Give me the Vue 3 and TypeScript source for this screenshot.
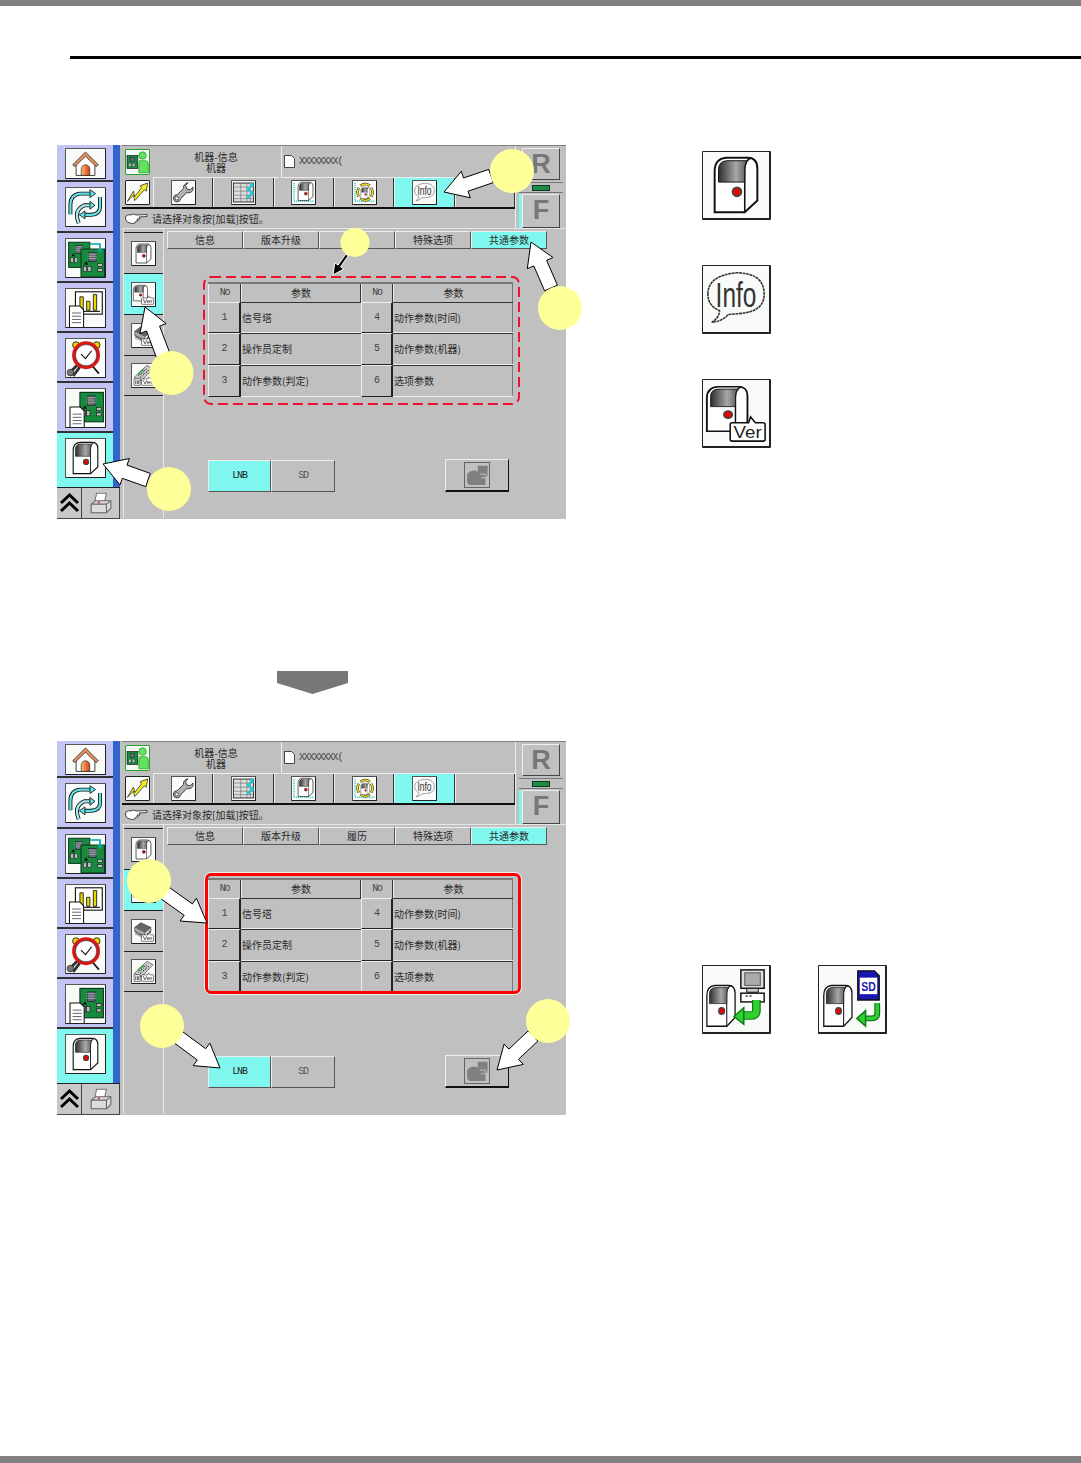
<script setup lang="ts">
type Point = [number, number];

interface Callout {
  center: Point;
  r: number;
  tail: Point;
  tip: Point;
  small?: boolean;
}

interface Step {
  frame: "dashed" | "solid";
  historyLabel: string;
  callouts: Callout[];
  sideIcons: string[];
  sideRow: boolean;
}

const rail = ["home", "cycle", "boards", "chart", "clock", "docboard", "device"];
const tools = ["wrench", "grid", "devframe", "devgear", "info", ""];
const subnav = ["device", "devver", "chipver", "chipsver"];

const rows = [
  [1, "信号塔", 4, "动作参数(时间)"],
  [2, "操作员定制", 5, "动作参数(机器)"],
  [3, "动作参数(判定)", 6, "选项参数"],
];

const steps: Step[] = [
  {
    frame: "dashed",
    historyLabel: "",
    sideIcons: ["device", "info", "devver"],
    sideRow: false,
    callouts: [
      { center: [455, 26], r: 22, tail: [434, 31], tip: [387, 47] },
      { center: [298, 97.5], r: 14.5, tail: [290, 110], tip: [276, 130], small: true },
      { center: [503, 163], r: 22, tail: [494, 143], tip: [474, 97] },
      { center: [114.5, 228], r: 22, tail: [106, 210], tip: [88, 162] },
      { center: [112, 344], r: 22, tail: [91, 335], tip: [46, 319] },
    ],
  },
  {
    frame: "solid",
    historyLabel: "履历",
    sideIcons: ["devpc", "devsd"],
    sideRow: true,
    callouts: [
      { center: [92, 140], r: 22, tail: [108, 152], tip: [150, 182] },
      { center: [105, 285], r: 22, tail: [121, 296], tip: [163, 327] },
      { center: [491, 280], r: 22, tail: [476, 295], tip: [440, 329] },
    ],
  },
];

// arrow outline from tail to tip, shaft and head sizes in px
function arrowPoints(c: Callout): string {
  const shaft = c.small ? 3 : 14;
  const head = c.small ? 11 : 28;
  const len = c.small ? 11 : 23;
  const dx = c.tip[0] - c.tail[0];
  const dy = c.tip[1] - c.tail[1];
  const d = Math.hypot(dx, dy);
  const ux = dx / d;
  const uy = dy / d;
  const bx = c.tip[0] - ux * len;
  const by = c.tip[1] - uy * len;
  const pt = (x: number, y: number, off: number) =>
    `${(x - uy * off).toFixed(1)},${(y + ux * off).toFixed(1)}`;
  return [
    pt(c.tail[0], c.tail[1], shaft / 2),
    pt(bx, by, shaft / 2),
    pt(bx, by, head / 2),
    pt(c.tip[0], c.tip[1], 0),
    pt(bx, by, -head / 2),
    pt(bx, by, -shaft / 2),
    pt(c.tail[0], c.tail[1], -shaft / 2),
  ].join(" ");
}
</script>

<template>
  <div class="page">
    <svg class="sprites" aria-hidden="true">
      <defs>
        <linearGradient id="win" x1="0" x2="1" y1="0" y2="0">
          <stop offset="0" stop-color="#2e2e2e" />
          <stop offset="0.6" stop-color="#a8a8a8" />
          <stop offset="1" stop-color="#555" />
        </linearGradient>
        <linearGradient id="door" x1="0" x2="1" y1="0" y2="0">
          <stop offset="0" stop-color="#f8c070" />
          <stop offset="1" stop-color="#d83818" />
        </linearGradient>
        <g id="g-device">
          <path d="M12 62V20Q12 7 24 6H46Q56 6 56 17V50L43 62Z" fill="#fff" stroke="#111" stroke-width="2" />
          <path d="M43 62V19Q43 8 50 6" fill="none" stroke="#111" stroke-width="1.6" />
          <path d="M16 31V18Q16 10 24 9H46Q43 11 43 18V31Z" fill="url(#win)" stroke="#111" />
          <circle cx="35" cy="41" r="4.5" fill="#e00" stroke="#444" stroke-width="2" />
        </g>
        <g id="g-pcb">
          <rect x="2" y="2" width="42" height="50" fill="#188a40" stroke="#0a3a1a" stroke-width="2" />
          <rect x="16" y="8" width="13" height="16" fill="#667" stroke="#111" />
          <path d="M14 11h17M14 15h17M14 19h17" stroke="#ccc" stroke-width="1" />
          <path d="M7 30l4-6 4 6z" fill="#111" />
          <rect x="6" y="33" width="6" height="9" fill="#bbb" stroke="#111" />
          <rect x="14" y="33" width="6" height="9" fill="#bbb" stroke="#111" />
          <rect x="32" y="28" width="8" height="5" fill="#bbb" stroke="#111" />
          <rect x="32" y="37" width="8" height="5" fill="#bbb" stroke="#111" />
        </g>
        <g id="g-doc">
          <path d="M2 2H18L24 8V36H2Z" fill="#fff" stroke="#111" stroke-width="1.6" />
          <path d="M6 13H20M6 18H20M6 23H20M6 28H20" stroke="#555" stroke-width="1.4" />
        </g>
        <g id="g-ver">
          <path d="M28 46Q28 44 30 44H47L49 38L54 44H62Q64 44 64 46V61Q64 63 62 63H30Q28 63 28 61Z" fill="#fff" stroke="#111" stroke-width="1.6" />
          <text x="46" y="60" class="svg-label ver-label" text-anchor="middle" textLength="29" lengthAdjust="spacingAndGlyphs">Ver</text>
        </g>
        <g id="g-chip">
          <path d="M8 22L26 8L56 22L38 38Z" fill="#666" stroke="#111" stroke-width="1.5" />
          <path d="M8 22V34L38 50V38M38 50L56 34V22" fill="#aaa" stroke="#111" stroke-width="1.5" />
          <path d="M12 34v10M18 37v10M24 40v10M30 43v10M44 38l6 5M50 33l6 5" stroke="#111" stroke-width="2" />
        </g>
      </defs>

      <symbol id="i-home" viewBox="0 0 68 68">
        <path d="M12 34L34 14L56 34V62H12Z" fill="#fff" stroke="#222" stroke-width="2" />
        <path d="M4 37L34 7L64 37L59 41L34 17L9 41Z" fill="#e8905a" stroke="#333" stroke-width="2" />
        <path d="M24 62V47a10 10 0 0 1 20 0V62Z" fill="url(#door)" stroke="#222" stroke-width="1.5" />
      </symbol>
      <symbol id="i-cycle" viewBox="0 0 68 68">
        <g fill="none" stroke-linecap="butt">
          <path d="M7 47V30Q7 12 24 10H42" stroke="#111" stroke-width="7" />
          <path d="M7 47V30Q7 12 24 10H42" stroke="#60e0e8" stroke-width="4" />
          <path d="M60 16V34Q60 47 44 48H32" stroke="#111" stroke-width="7" />
          <path d="M60 16V34Q60 47 44 48H32" stroke="#60e0e8" stroke-width="4" />
          <path d="M22 63Q12 40 32 31H42" stroke="#111" stroke-width="7" />
          <path d="M22 63Q12 40 32 31H42" stroke="#a8eef0" stroke-width="4" />
        </g>
        <path d="M42 3L52 10L42 17ZM33 41L23 48L33 55ZM42 24L51 31L42 38Z" fill="#60e0e8" stroke="#111" stroke-width="1.5" />
      </symbol>
      <symbol id="i-boards" viewBox="0 0 68 68">
        <use href="#g-pcb" transform="translate(2 4) scale(.9)" />
        <use href="#g-pcb" transform="translate(24 16)" />
        <path d="M42 9H60V20" fill="none" stroke="#0aa" stroke-width="3" />
        <path d="M55 18H65L60 25Z" fill="#0aa" />
      </symbol>
      <symbol id="i-chart" viewBox="0 0 68 68">
        <rect x="16" y="5" width="48" height="40" fill="#fff" stroke="#111" stroke-width="2" />
        <path d="M24 38V14h6v24zM36 38V22h6v16zM48 38V10h6v28z" fill="#e8d800" stroke="#111" stroke-width="1.5" />
        <path d="M20 40H60" stroke="#111" stroke-width="2" />
        <use href="#g-doc" transform="translate(3 28) scale(1.15)" />
      </symbol>
      <symbol id="i-clock" viewBox="0 0 68 68">
        <circle cx="17" cy="11" r="6" fill="#e8d800" stroke="#111" stroke-width="1.5" />
        <circle cx="54" cy="11" r="6" fill="#e8d800" stroke="#111" stroke-width="1.5" />
        <path d="M6 60L22 44M12 66L24 50" stroke="#333" stroke-width="5" />
        <circle cx="7" cy="60" r="6" fill="#777" stroke="#111" />
        <path d="M46 48L58 62" stroke="#111" stroke-width="3" />
        <circle cx="35" cy="29" r="22" fill="#fff" stroke="#d81818" stroke-width="6" />
        <circle cx="35" cy="29" r="19" fill="none" stroke="#111" stroke-width="1" />
        <path d="M26 27L34 35L45 21" fill="none" stroke="#111" stroke-width="2" />
      </symbol>
      <symbol id="i-docboard" viewBox="0 0 68 68">
        <use href="#g-pcb" transform="translate(22 4) scale(1,1.05)" />
        <use href="#g-doc" transform="translate(4 30) scale(1.15)" />
      </symbol>
      <symbol id="i-device" viewBox="0 0 68 68">
        <use href="#g-device" />
      </symbol>
      <symbol id="i-person" viewBox="0 0 68 68">
        <path d="M40 30H58Q66 30 66 40V66H38V46Z" fill="#66e060" stroke="#0a9a18" stroke-width="2" />
        <circle cx="49" cy="15" r="11" fill="#66e060" stroke="#0a9a18" stroke-width="2" />
        <rect x="3" y="15" width="32" height="38" fill="#188a40" stroke="#111" stroke-width="2" />
        <rect x="13" y="20" width="11" height="12" fill="#667" stroke="#111" />
        <path d="M8 38h7v9h-7zM19 38h7v9h-7z" fill="#ccc" stroke="#111" />
      </symbol>
      <symbol id="i-trend" viewBox="0 0 68 68">
        <path d="M4 60L22 30L26 46L46 20L42 14L64 6L60 30L54 26L26 58L22 42Z" fill="#f4ec20" stroke="#111" stroke-width="2" />
      </symbol>
      <symbol id="i-wrench" viewBox="0 0 68 68">
        <path d="M47 5L40 14L44 24L54 26L62 18Q64 30 54 34Q48 36 44 34L26 52Q24 62 14 62Q4 60 4 50Q6 40 16 40L34 22Q32 10 47 5Z" fill="#b0b0b0" stroke="#222" stroke-width="2.5" />
        <circle cx="14" cy="51" r="5" fill="#fff" stroke="#222" stroke-width="2" />
      </symbol>
      <symbol id="i-grid" viewBox="0 0 68 68">
        <rect x="4" y="6" width="60" height="56" fill="#ddd" stroke="#111" stroke-width="2.5" />
        <path d="M4 18H64M4 30H64M4 42H64M4 52H64M26 6V62M44 6V62M54 6V62" stroke="#555" stroke-width="1.5" />
        <path d="M44 18h10v12H44zM54 30h10v12H54zM44 42h10v10H44zM54 6h10v12H54z" fill="#20c8d8" />
      </symbol>
      <symbol id="i-devframe" viewBox="0 0 68 68">
        <path d="M6 6V60H64" fill="none" stroke="#20c0d0" stroke-width="4" stroke-dasharray="3 3" />
        <use href="#g-device" transform="translate(6 -2) scale(1,.96)" />
      </symbol>
      <symbol id="i-devgear" viewBox="0 0 68 68">
        <path d="M6 6V60H64" fill="none" stroke="#20c0d0" stroke-width="4" stroke-dasharray="3 3" />
        <path d="M22 14Q36 4 50 14M54 20Q62 34 54 46M50 52Q36 62 22 52M17 46Q10 34 17 20" fill="none" stroke="#111" stroke-width="7" />
        <path d="M22 14Q36 4 50 14M54 20Q62 34 54 46M50 52Q36 62 22 52M17 46Q10 34 17 20" fill="none" stroke="#f0e020" stroke-width="4.5" />
        <use href="#g-device" transform="translate(16 15) scale(.6)" />
      </symbol>
      <symbol id="i-info" viewBox="0 0 68 68">
        <path d="M5 29Q5 10 34 7Q63 7 63 29Q63 47 38 49L26 50Q20 57 9 58Q17 53 17 46Q5 41 5 29Z" fill="none" stroke="#333" stroke-width="1.6" stroke-dasharray="3 .6" />
        <text x="34" y="42" class="svg-label info-label" text-anchor="middle" textLength="42" lengthAdjust="spacingAndGlyphs">Info</text>
      </symbol>
      <symbol id="i-devver" viewBox="0 0 68 68">
        <use href="#g-device" transform="translate(-7.4 2) scale(.95 .82)" />
        <use href="#g-ver" />
      </symbol>
      <symbol id="i-chipver" viewBox="0 0 68 68">
        <use href="#g-chip" />
        <use href="#g-ver" />
      </symbol>
      <symbol id="i-chipsver" viewBox="0 0 68 68">
        <path d="M6 40L44 4L62 14L28 50Z" fill="#ccc" stroke="#111" stroke-width="1.5" />
        <path d="M18 36L44 14M24 40L50 18" stroke="#222" stroke-width="3" stroke-dasharray="3 3" />
        <path d="M18 30L36 14" stroke="#18a020" stroke-width="5" stroke-dasharray="5 3" />
        <rect x="6" y="44" width="18" height="20" fill="#fff" stroke="#111" stroke-width="1.5" />
        <path d="M11 48v12M16 48v12M20 48v12" stroke="#111" stroke-width="2" />
        <use href="#g-ver" />
      </symbol>
      <symbol id="i-devpc" viewBox="0 0 68 68">
        <use href="#g-device" transform="translate(-3.9 15.5) scale(.66 .75)" />
        <rect x="39" y="4" width="24" height="19" fill="#ddd" stroke="#111" stroke-width="1.5" />
        <rect x="43" y="7" width="16" height="13" fill="#aaa" stroke="#555" />
        <path d="M45 23h12v4h-12z" fill="#ccc" stroke="#111" />
        <rect x="39" y="28" width="24" height="9" fill="#fff" stroke="#111" stroke-width="1.5" />
        <path d="M44 31h2M48 31h2" stroke="#333" stroke-width="1.5" />
        <path d="M55 35V46Q55 51 49 51H40" fill="none" stroke="#0c7a18" stroke-width="9" />
        <path d="M55 35V46Q55 51 49 51H40" fill="none" stroke="#30d030" stroke-width="6.5" />
        <path d="M42 43L32 52L42 60Z" fill="#30d030" stroke="#0c7a18" stroke-width="1.5" />
      </symbol>
      <symbol id="i-devsd" viewBox="0 0 68 68">
        <use href="#g-device" transform="translate(-3 15.5) scale(.66 .75)" />
        <path d="M40 5H57L62 10V35H40Z" fill="#1818b0" stroke="#111" stroke-width="1.5" />
        <rect x="42" y="12" width="18" height="17" fill="#fff" />
        <text x="51" y="26" class="svg-label sd-label" text-anchor="middle" textLength="15" lengthAdjust="spacingAndGlyphs">SD</text>
        <path d="M60 38V49Q60 54 54 54H47" fill="none" stroke="#0c7a18" stroke-width="6" />
        <path d="M60 38V49Q60 54 54 54H47" fill="none" stroke="#30d030" stroke-width="3.5" />
        <path d="M48 46L39 54L48 62Z" fill="#30d030" stroke="#0c7a18" stroke-width="1.5" />
      </symbol>
      <symbol id="i-disabled" viewBox="0 0 68 68">
        <path d="M6 34Q8 24 22 22Q34 20 36 26V8H64V34L58 44V62H16Q6 62 6 50Z" fill="#808080" />
        <path d="M42 32H58V42H46" fill="none" stroke="#aaa" stroke-width="4" />
      </symbol>
    </svg>

    <div class="top-bar"></div>
    <div class="rule"></div>

    <template v-for="(step, si) in steps" :key="si">
      <div v-if="si === 1" class="down-arrow">
        <svg width="71" height="23" viewBox="0 0 71 23"><path d="M0 0H71V12L35.5 23L0 12Z" fill="#777" /></svg>
      </div>

      <section class="step" :class="{ first: si === 0 }">
        <div class="screen">
          <aside class="rail">
            <div class="rail-items">
              <div v-for="(name, i) in rail" :key="name" class="rail-item" :class="{ active: name === 'device' }">
                <span class="card rail-card" :class="{ short: i === 0 }">
                  <svg class="fill"><use :href="`#i-${name}`" /></svg>
                </span>
              </div>
            </div>
            <div class="rail-foot">
              <span class="foot-btn chevrons">
                <svg width="19" height="20" viewBox="0 0 19 20">
                  <path d="M1 10L9.5 2L18 10M1 18L9.5 10L18 18" fill="none" stroke="#000" stroke-width="3" />
                </svg>
              </span>
              <span class="foot-btn printer">
                <svg width="24" height="24" viewBox="0 0 22 22">
                  <path d="M7 2H16L14 11H5Z" fill="#fff" stroke="#777" />
                  <path d="M2 12L6 9H20V16L16 20H2Z" fill="#ddd" stroke="#666" />
                  <path d="M2 12H16V20M16 12L20 9" fill="none" stroke="#666" />
                  <circle cx="9" cy="10.5" r="1" fill="#d33" />
                </svg>
              </span>
            </div>
          </aside>

          <div class="main">
            <div class="top">
              <div class="top-left">
                <div class="head-row">
                  <span class="card person"><svg class="fill"><use href="#i-person" /></svg></span>
                  <div class="title-cell">机器-信息<br />机器</div>
                  <div class="file-cell">
                    <svg width="11" height="13" viewBox="0 0 11 13">
                      <path d="M.5.5H7.5L10.5 3.5V12.5H.5Z" fill="#fff" stroke="#444" />
                    </svg>
                    <span class="mono">XXXXXXXX(</span>
                  </div>
                </div>
                <div class="tool-row">
                  <span class="card trend"><svg class="fill"><use href="#i-trend" /></svg></span>
                  <div class="tools">
                    <div v-for="(name, i) in tools" :key="i" class="tool" :class="{ active: name === 'info' }">
                      <span v-if="name" class="card small"><svg class="fill"><use :href="`#i-${name}`" /></svg></span>
                    </div>
                  </div>
                </div>
                <div class="hint-row">
                  <svg width="23" height="11" viewBox="0 0 23 11">
                    <path d="M1 3Q3 1 6 2Q8 0 11 2L22 1.5V3.5L14 4L15 6H12L13 8H11L10 10Q7 11 5 10Q2 10 1 7Q0 5 1 3Z" fill="#fff" stroke="#333" stroke-width=".9" />
                  </svg>
                  <span>请选择对象按[加载]按钮。</span>
                </div>
              </div>
              <div class="top-right">
                <div class="rf-btn">R</div>
                <div class="status"><span class="chip"></span></div>
                <div class="rf-btn f">F</div>
              </div>
            </div>

            <div class="lower">
              <nav class="subnav">
                <div v-for="(name, i) in subnav" :key="name" class="sub-item" :class="{ active: i === 1 }">
                  <span class="card small"><svg class="fill"><use :href="`#i-${name}`" /></svg></span>
                </div>
              </nav>

              <div class="content">
                <div class="tabs">
                  <div class="tab">信息</div>
                  <div class="tab">版本升级</div>
                  <div class="tab">{{ step.historyLabel }}</div>
                  <div class="tab">特殊选项</div>
                  <div class="tab active">共通参数</div>
                </div>

                <div class="table-wrap">
                  <div class="param-table">
                    <div class="th mono">No</div>
                    <div class="th">参数</div>
                    <div class="th mono">No</div>
                    <div class="th">参数</div>
                    <template v-for="row in rows" :key="row[0]">
                      <div class="no mono">{{ row[0] }}</div>
                      <div class="val">{{ row[1] }}</div>
                      <div class="no mono">{{ row[2] }}</div>
                      <div class="val">{{ row[3] }}</div>
                    </template>
                  </div>
                  <div v-if="step.frame === 'solid'" class="frame-solid"></div>
                  <svg v-else class="frame-dashed" width="317" height="129" viewBox="0 0 317 129">
                    <rect x="1" y="1" width="315" height="127" rx="7" fill="none" stroke="#f01030" stroke-width="2" stroke-dasharray="10 5" />
                  </svg>
                </div>

                <div class="bottom-row">
                  <div class="seg active mono">LNB</div>
                  <div class="seg mono">SD</div>
                  <div class="load-btn">
                    <span class="load-icon"><svg class="fill"><use href="#i-disabled" /></svg></span>
                  </div>
                </div>
              </div>
            </div>
          </div>

          <svg class="overlay" width="509" height="374">
            <g v-for="(c, i) in step.callouts" :key="i">
              <polygon
                :points="arrowPoints(c)"
                :fill="c.small ? '#000' : '#fff'"
                :stroke="c.small ? '#fff' : '#000'"
                stroke-width="1"
              />
              <circle :cx="c.center[0]" :cy="c.center[1]" :r="c.r" fill="#ffff99" />
            </g>
          </svg>
        </div>

        <div class="side" :class="{ row: step.sideRow }">
          <span v-for="name in step.sideIcons" :key="name" class="card big">
            <svg class="fill"><use :href="`#i-${name}`" /></svg>
          </span>
        </div>
      </section>
    </template>

    <div class="bottom-bar"></div>
  </div>
</template>

<style>
html,
body {
  background: #fff;
}
</style>

<style scoped>
* {
  box-sizing: border-box;
}

.page {
  position: relative;
  display: flex;
  flex-direction: column;
  height: 1463px;
  overflow: hidden;
  background: #fff;
  color: #2a2a2a;
  font-family: "Noto Sans CJK SC", "Liberation Sans", sans-serif;
  font-size: 10px;
  line-height: 1;
}

.sprites {
  position: absolute;
  width: 0;
  height: 0;
}

.top-bar {
  height: 6px;
  flex: none;
  background: #808080;
}

.rule {
  height: 3px;
  flex: none;
  margin: 50px 0 0 70px;
  background: #000;
}

.bottom-bar {
  height: 7px;
  flex: none;
  margin-top: auto;
  background: #808080;
}

.down-arrow {
  height: 23px;
  margin: 152px 0 47px 277px;
}

.down-arrow svg {
  display: block;
}

.step {
  display: flex;
  padding-left: 57px;
}

.step.first {
  margin-top: 86px;
}

.screen {
  position: relative;
  display: flex;
  flex: none;
  width: 509px;
  height: 374px;
  background: #c0c0c0;
}

.side {
  display: flex;
  flex-direction: column;
  align-items: flex-start;
  gap: 45px;
  padding: 6px 0 0 136px;
}

.side.row {
  flex-direction: row;
  gap: 47px;
  padding-top: 224px;
}

.card {
  display: block;
  flex: none;
  background: #f8fbf8;
  border: 1px solid #555;
  border-right-color: #222;
  border-bottom-color: #222;
  border-radius: 1px;
}

.card.big {
  width: 69px;
  height: 69px;
  border: 1px solid #222;
  border-right-width: 2px;
  border-bottom-width: 2px;
}

.card.small {
  width: 25px;
  height: 25px;
}

.fill {
  display: block;
  width: 100%;
  height: 100%;
}

.svg-label {
  font-family: "Liberation Sans", sans-serif;
  fill: #222;
}

.info-label {
  font-size: 36px;
  fill: #333;
}

.ver-label {
  font-size: 17px;
}

.sd-label {
  font-size: 14px;
  font-weight: 700;
  fill: #1818b0;
}

.mono {
  font-family: "Liberation Mono", "Noto Sans CJK SC", monospace;
  font-size: 10px;
  letter-spacing: -1.2px;
  color: #444;
}

/* left rail */
.rail {
  display: flex;
  flex-direction: column;
  flex: none;
  width: 65px;
}

.rail-items {
  width: 63px;
  height: 342px;
  border-right: 7px solid #3366cc;
}

.rail-item {
  height: 50px;
  padding: 5px 0 0 8px;
  background: #c4c4f4;
  border-bottom: 2px solid #333;
}

.rail-item:first-child {
  height: 37px;
  padding-top: 3px;
}

.rail-item:nth-child(2) {
  height: 51px;
}

.rail-item:last-child {
  height: 54px;
  border-bottom: 0;
}

.rail-item.active {
  background: #80f8f0;
}

.rail-card {
  width: 41px;
  height: 40px;
}

.rail-card.short {
  height: 31px;
}

.rail-foot {
  display: flex;
  width: 63px;
  height: 32px;
  border-top: 1px solid #222;
  background: #c8c8c8;
}

.foot-btn {
  display: flex;
  align-items: center;
  justify-content: center;
  border-right: 1px solid #444;
  border-bottom: 1px solid #444;
}

.chevrons {
  width: 25px;
}

.printer {
  width: 38px;
}

/* top panels */
.main {
  display: flex;
  flex: 1;
  flex-direction: column;
  min-width: 0;
}

.top {
  display: flex;
  flex: none;
  height: 84px;
  border-top: 1px solid #808080;
  border-bottom: 1px solid #e6e6e6;
}

.top-left {
  display: flex;
  flex: none;
  flex-direction: column;
  width: 394px;
  border-right: 1px solid #eee;
}

.head-row {
  display: flex;
  flex: none;
  align-items: stretch;
  height: 32px;
  padding-left: 3px;
}

.person {
  width: 25px;
  height: 26px;
  margin: 3px 3px 0 0;
  border: 1px solid #2da02d;
}

.title-cell {
  display: flex;
  align-items: center;
  justify-content: center;
  width: 126px;
  font-size: 10px;
  line-height: 11px;
  text-align: center;
  border-bottom: 1px solid #eee;
}

.file-cell {
  display: flex;
  flex: 1;
  align-items: center;
  gap: 4px;
  margin-left: 2px;
  padding-left: 2px;
  border-left: 1px solid #eee;
  border-bottom: 1px solid #eee;
}

.tool-row {
  display: flex;
  flex: none;
  align-items: center;
  height: 31px;
  padding-left: 3px;
  border-bottom: 2px solid #111;
}

.trend {
  width: 25px;
  height: 25px;
  margin-right: 3px;
  border: 1px solid #222;
}

.tools {
  display: flex;
  flex: 1;
  height: 100%;
}

.tool {
  display: flex;
  flex: 1;
  align-items: center;
  justify-content: center;
  border-left: 1px solid #eee;
  border-right: 1px solid #333;
}

.tool.active {
  background: #80f8f0;
}

.hint-row {
  display: flex;
  flex: 1;
  align-items: center;
  gap: 4px;
  padding-left: 3px;
}

.top-right {
  display: flex;
  flex: none;
  flex-direction: column;
  align-items: flex-start;
  width: 50px;
  padding: 2px 0 0 6px;
}

.rf-btn {
  width: 38px;
  height: 32px;
  font-family: "Liberation Sans", sans-serif;
  font-size: 27px;
  font-weight: 700;
  line-height: 31px;
  text-align: center;
  color: #777;
  border: 1px solid #eee;
  border-right-color: #444;
  border-bottom-color: #444;
}

.rf-btn.f {
  height: 34px;
  box-shadow: -3px 0 0 #80f8f0;
}

.status {
  display: flex;
  flex: none;
  align-items: center;
  justify-content: center;
  width: 44px;
  height: 11px;
  margin: 2px 0 1px -3px;
  border-top: 1px solid #777;
  border-bottom: 1px solid #777;
}

.chip {
  width: 18px;
  height: 6px;
  background: #1c8a48;
  border: 1px solid #0a3a1a;
}

/* lower part */
.lower {
  display: flex;
  flex: 1;
}

.subnav {
  flex: none;
  width: 41px;
  margin: 0 0 1px 1px;
  padding-top: 3px;
  border-left: 1px solid #e6e6e6;
  border-right: 1px solid #e6e6e6;
}

.sub-item {
  display: flex;
  align-items: center;
  justify-content: center;
  height: 41px;
  border-top: 1px solid #222;
}

.sub-item:last-child {
  border-bottom: 1px solid #222;
}

.sub-item.active {
  background: #80f8f0;
}

.content {
  flex: 1;
  padding: 2px 0 0 3px;
}

.tabs {
  display: flex;
  height: 18px;
}

.tab {
  display: flex;
  align-items: center;
  justify-content: center;
  width: 76px;
  border: 1px solid #eee;
  border-right-color: #555;
  border-bottom-color: #555;
}

.tab.active {
  background: #80f8f0;
}

.table-wrap {
  position: relative;
  width: 305px;
  margin: 33px 0 0 41px;
}

.param-table {
  display: grid;
  grid-template-columns: 33px 120px 32px 120px;
  grid-template-rows: 18px 31px 32px 32px;
  border-top: 2px solid #777;
  border-right: 1px solid #777;
}

.th {
  display: flex;
  align-items: center;
  justify-content: center;
  border-left: 1px solid #eee;
  border-right: 1px solid #333;
}

.param-table > .th:nth-child(4) {
  border-right: 0;
}

.no {
  display: flex;
  align-items: center;
  justify-content: center;
  border: 1px solid #eee;
  border-right: 2px solid #222;
  border-bottom: 1px solid #222;
}

.val {
  display: flex;
  align-items: center;
  padding-left: 1px;
  border-top: 1px solid #333;
  border-bottom: 1px solid #eee;
}

.frame-dashed {
  position: absolute;
  left: -5px;
  top: -6px;
}

.frame-solid {
  position: absolute;
  left: -3px;
  top: -5px;
  right: -8px;
  bottom: -1px;
  border: 3px solid #ff0000;
  border-radius: 6px;
  outline: 1px solid #eee;
  outline-offset: 0;
}

.bottom-row {
  display: flex;
  width: 301px;
  margin: 63px 0 0 41px;
}

.seg {
  display: flex;
  align-items: center;
  justify-content: center;
  width: 63px;
  height: 32px;
  color: #555;
  border: 1px solid #eee;
  border-right-color: #555;
  border-bottom-color: #555;
}

.seg + .seg {
  width: 64px;
}

.seg.active {
  background: #80f8f0;
  color: #222;
}

.load-btn {
  display: flex;
  align-items: center;
  justify-content: center;
  width: 64px;
  height: 33px;
  margin: -1px 0 0 auto;
  border: 1px solid #eee;
  border-right: 1px solid #111;
  border-bottom: 2px solid #111;
}

.load-icon {
  display: block;
  width: 26px;
  height: 26px;
  border: 1px solid #666;
}

.overlay {
  position: absolute;
  left: 0;
  top: 0;
  overflow: visible;
  pointer-events: none;
}
</style>
